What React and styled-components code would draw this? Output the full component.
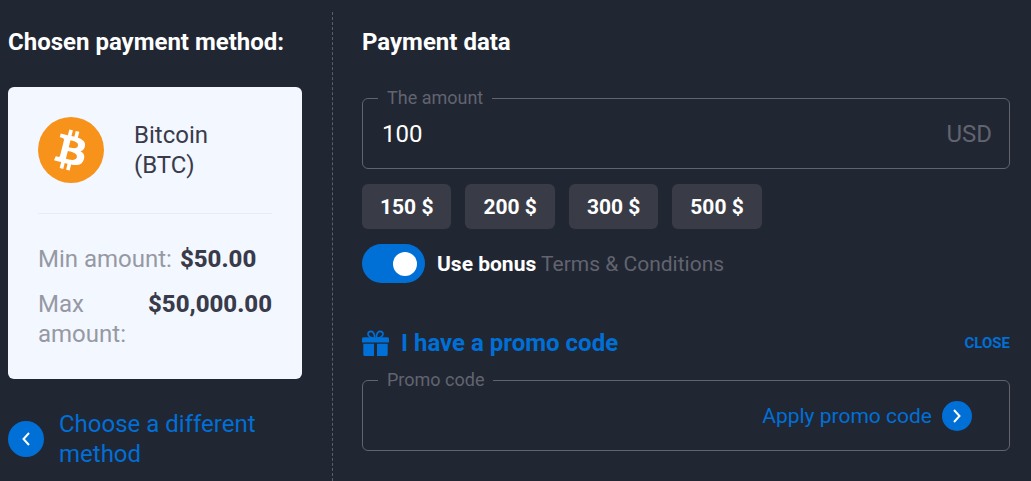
import { useState } from "react";
import { styled, createGlobalStyle } from "styled-components";

const PRESETS = [150, 200, 300, 500];

function BitcoinLogo() {
  return (
    <CoinSvg viewBox="0 0 32 32" aria-hidden="true">
      <circle cx="16" cy="16" r="16" fill="#f7931a" />
      <path
        fill="#fff"
        fillRule="evenodd"
        transform="translate(-0.4 0)"
        d="M23.189 14.02c.314-2.096-1.283-3.223-3.465-3.975l.708-2.84-1.728-.43-.69 2.765c-.454-.114-.92-.22-1.385-.326l.695-2.783L15.596 6l-.708 2.839c-.376-.086-.746-.17-1.104-.26l.002-.009-2.384-.595-.46 1.846s1.283.294 1.256.312c.7.175.826.638.805 1.006l-.806 3.235c.048.012.11.03.18.057l-.183-.045-1.13 4.532c-.086.212-.303.531-.793.41.018.025-1.256-.313-1.256-.313l-.858 1.978 2.25.561c.418.105.828.215 1.231.318l-.715 2.872 1.727.43.708-2.84c.472.127.93.245 1.378.357l-.706 2.828 1.728.43.715-2.866c2.948.558 5.164.333 6.097-2.333.752-2.146-.037-3.385-1.588-4.192 1.13-.26 1.98-1.003 2.207-2.538zm-3.95 5.538c-.533 2.147-4.148.986-5.32.695l.95-3.805c1.172.293 4.929.872 4.37 3.11zm.535-5.569c-.487 1.953-3.495.96-4.47.717l.86-3.45c.975.243 4.118.696 3.61 2.733z"
      />
    </CoinSvg>
  );
}

function GiftIcon() {
  return (
    <GiftSvg viewBox="0 0 27 27" aria-hidden="true">
      <g fill="none" stroke="currentColor" strokeWidth="1.7">
        <path d="M12.8 8.2C9.6 8.2 6 6.7 6 4.1C6 2.2 7.5 1.3 9 1.4C11.4 1.6 12.6 5 12.8 8.2Z" />
        <path d="M14.2 8.2C17.4 8.2 21 6.7 21 4.1C21 2.2 19.5 1.3 18 1.4C15.6 1.6 14.4 5 14.2 8.2Z" />
      </g>
      <path
        fill="currentColor"
        d="M1.5 7.3H12V12.5H0V8.8Q0 7.3 1.5 7.3ZM15 7.3H25.5Q27 7.3 27 8.8V12.5H15ZM12 8.3H15V12.5H12ZM1.3 13.7H12V26H2.8Q1.3 26 1.3 24.5ZM15 13.7H25.7V24.5Q25.7 26 24.2 26H15Z"
      />
    </GiftSvg>
  );
}

function Chevron({ left }) {
  return (
    <ChevronSvg viewBox="0 0 8 14" aria-hidden="true">
      <path d={left ? "M7 1L1.5 7L7 13" : "M1 1L6.5 7L1 13"} />
    </ChevronSvg>
  );
}

function App() {
  const [amount, setAmount] = useState("100");
  const [bonus, setBonus] = useState(true);
  const [promo, setPromo] = useState("");

  return (
    <Page>
      <GlobalStyle />
      <MethodPanel>
        <Title>Chosen payment method:</Title>
        <MethodCard>
          <MethodHead>
            <BitcoinLogo />
            <MethodName>
              Bitcoin
              <br />
              (BTC)
            </MethodName>
          </MethodHead>
          <Limits>
            <LimitRow>
              <dt>Min amount:</dt>
              <dd>$50.00</dd>
            </LimitRow>
            <LimitRow>
              <dt>Max amount:</dt>
              <dd>$50,000.00</dd>
            </LimitRow>
          </Limits>
        </MethodCard>
        <BackLink href="#methods">
          <RoundMark $size={36}>
            <Chevron left />
          </RoundMark>
          <span>Choose a different method</span>
        </BackLink>
      </MethodPanel>

      <DataPanel>
        <Title>Payment data</Title>
        <Field>
          <FieldLegend>
            <label htmlFor="amount">The amount</label>
          </FieldLegend>
          <FieldInput id="amount" value={amount} onChange={(e) => setAmount(e.target.value)} />
          <Currency>USD</Currency>
        </Field>
        <Presets>
          {PRESETS.map((value) => (
            <PresetButton key={value} type="button" onClick={() => setAmount(String(value))}>
              {value} $
            </PresetButton>
          ))}
        </Presets>
        <BonusRow>
          <Toggle
            id="bonus"
            type="checkbox"
            checked={bonus}
            onChange={(e) => setBonus(e.target.checked)}
          />
          <BonusText>
            <BonusLabel htmlFor="bonus">Use bonus</BonusLabel>{" "}
            <TermsLink href="#terms">Terms &amp; Conditions</TermsLink>
          </BonusText>
        </BonusRow>
        <PromoHead>
          <GiftIcon />
          <PromoTitle>I have a promo code</PromoTitle>
          <CloseButton type="button">CLOSE</CloseButton>
        </PromoHead>
        <Field>
          <FieldLegend>
            <label htmlFor="promo">Promo code</label>
          </FieldLegend>
          <FieldInput id="promo" value={promo} onChange={(e) => setPromo(e.target.value)} />
          <ApplyButton type="button">
            Apply promo code
            <RoundMark $size={30}>
              <Chevron />
            </RoundMark>
          </ApplyButton>
        </Field>
      </DataPanel>
    </Page>
  );
}

export default App;

const GlobalStyle = createGlobalStyle`
  * {
    box-sizing: border-box;
  }
  body {
    margin: 0;
    background: #212633;
    color: #fff;
    font: 24px/30px Roboto, sans-serif;
  }
  button, input {
    font: inherit;
    color: inherit;
  }
  a {
    text-decoration: none;
  }
`;

const Page = styled.main`
  display: flex;
  min-height: 100vh;
  padding: 12px 21px 0 8px;
`;

const MethodPanel = styled.section`
  flex: 0 0 325px;
  padding: 15px 30px 12px 0;
  border-right: 1px dashed #5a5e68;
`;

const DataPanel = styled.section`
  flex: 1;
  min-width: 0;
  padding: 15px 0 30px 29px;
`;

const Title = styled.h2`
  margin: 0 0 30px;
  font-size: 24px;
  font-weight: 700;
  line-height: 30px;
`;

const MethodCard = styled.div`
  padding: 30px;
  border-radius: 6px;
  background: #f3f7ff;
  color: #393b4b;
`;

const MethodHead = styled.div`
  display: flex;
  align-items: center;
  gap: 30px;
  padding-bottom: 30px;
  border-bottom: 1px solid #e9edf2;
`;

const CoinSvg = styled.svg`
  flex: none;
  width: 66px;
  height: 66px;
`;

const MethodName = styled.div`
  flex: 1;
`;

const Limits = styled.dl`
  display: flex;
  flex-direction: column;
  gap: 15px;
  margin: 30px 0 0;
`;

const LimitRow = styled.div`
  display: flex;
  gap: 8px;

  dt {
    color: #9699a3;
  }

  dd {
    margin: 0;
    font-weight: 800;
  }
`;

const BackLink = styled.a`
  display: flex;
  align-items: center;
  gap: 15px;
  margin-top: 30px;
  color: #006fd6;
`;

const RoundMark = styled.span`
  display: flex;
  flex: none;
  align-items: center;
  justify-content: center;
  width: ${(p) => p.$size}px;
  height: ${(p) => p.$size}px;
  border-radius: 50%;
  background: #006fd6;
  color: #fff;
`;

const ChevronSvg = styled.svg`
  width: 8px;
  height: 14px;
  fill: none;
  stroke: currentColor;
  stroke-width: 2;
`;

const Field = styled.fieldset`
  display: flex;
  align-items: center;
  min-width: 0;
  height: 82px;
  margin: 0;
  padding: 0 15px 10px;
  border: 1px solid #61646f;
  border-radius: 6px;
`;

const FieldLegend = styled.legend`
  padding: 0 9px;
  color: #61646f;
  font-size: 18px;
  line-height: 22px;
`;

const FieldInput = styled.input`
  flex: 1;
  min-width: 0;
  height: 50px;
  padding: 0 4px;
  border: 0;
  outline: 0;
  background: none;
`;

const Currency = styled.span`
  padding-right: 2px;
  color: #61646f;
`;

const Presets = styled.div`
  display: flex;
  flex-wrap: wrap;
  gap: 14px;
  margin-top: 15px;
`;

const PresetButton = styled.button`
  height: 45px;
  padding: 0 18px;
  border: 0;
  border-radius: 6px;
  background: #393c47;
  font-size: 21px;
  font-weight: 700;
  cursor: pointer;
`;

const BonusRow = styled.div`
  display: flex;
  align-items: center;
  gap: 12px;
  margin-top: 15px;
`;

const Toggle = styled.input`
  appearance: none;
  display: flex;
  flex: none;
  align-items: center;
  justify-content: ${(p) => (p.checked ? "flex-end" : "flex-start")};
  width: 63px;
  height: 39px;
  margin: 0;
  padding: 0 8px;
  border-radius: 20px;
  background: ${(p) => (p.checked ? "#006fd6" : "#393c47")};
  cursor: pointer;

  &::before {
    content: "";
    width: 24px;
    height: 24px;
    border-radius: 50%;
    background: #fff;
  }
`;

const BonusText = styled.div`
  font-size: 21px;
`;

const BonusLabel = styled.label`
  font-weight: 700;
`;

const TermsLink = styled.a`
  color: #61646f;
`;

const PromoHead = styled.div`
  display: flex;
  align-items: center;
  gap: 12px;
  margin: 45px 0 11px;
  color: #006fd6;
`;

const GiftSvg = styled.svg`
  flex: none;
  width: 27px;
  height: 27px;
`;

const PromoTitle = styled.h3`
  flex: 1;
  margin: 0;
  font-size: 24px;
  font-weight: 700;
`;

const CloseButton = styled.button`
  padding: 0;
  border: 0;
  background: none;
  font-size: 15px;
  font-weight: 700;
  cursor: pointer;
`;

const ApplyButton = styled.button`
  display: flex;
  align-items: center;
  gap: 10px;
  padding: 0 22px 0 0;
  border: 0;
  background: none;
  color: #006fd6;
  font-size: 21px;
  cursor: pointer;
`;
